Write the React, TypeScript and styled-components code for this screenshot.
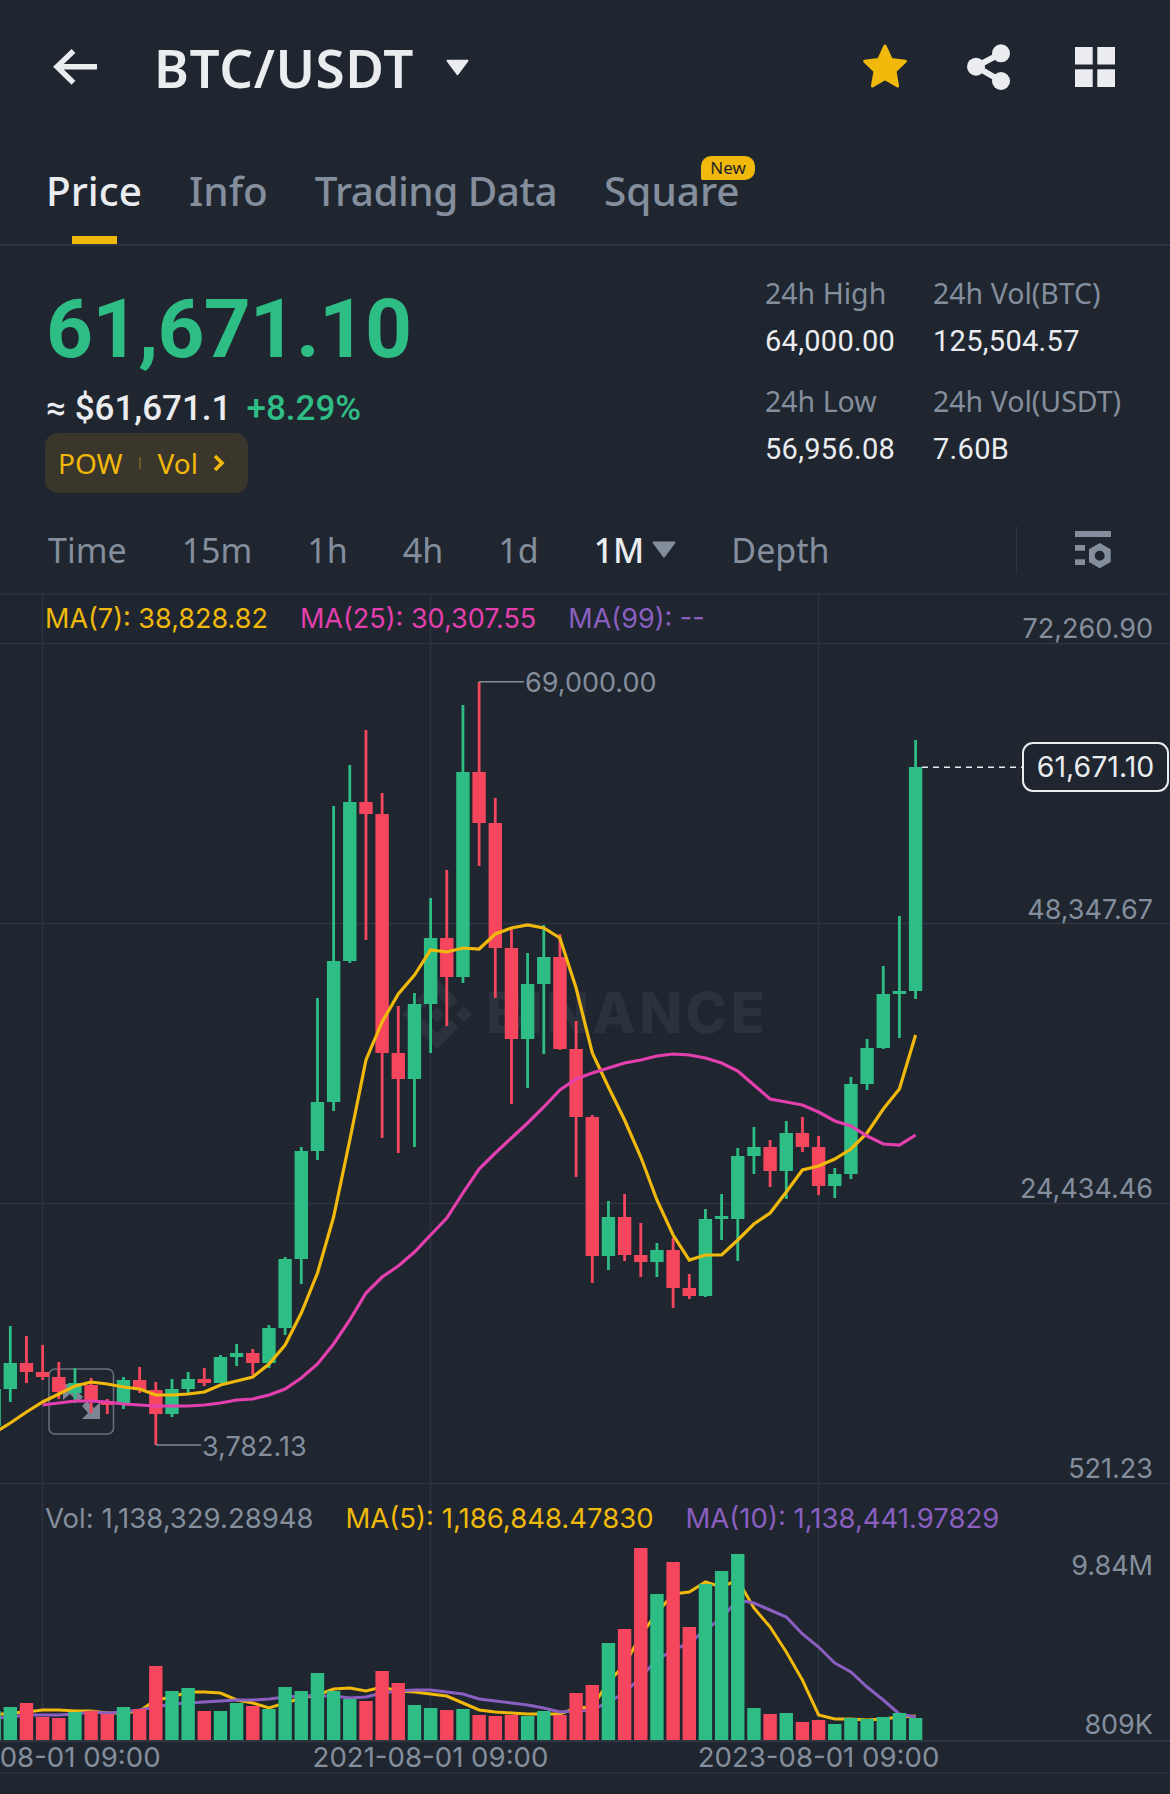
import styled, { createGlobalStyle } from 'styled-components'

const BG = '#1f2630'
const GREEN = '#2ebd85'
const RED = '#f6465d'
const YELLOW = '#f0b90b'
const PINK = '#e43fae'
const PURPLE = '#8a5fc0'
const GREY = '#848e9c'
const LINE = '#2e3541'
const UI_FONT = '"Noto Sans", sans-serif'
const NUM_FONT = 'Roboto, sans-serif'
const CHART_FONT = 'Inter, sans-serif'

const GlobalStyle = createGlobalStyle`
  html, body {
    margin: 0;
    padding: 0;
    background: ${BG};
  }
`

const Page = styled.div`
  width: 1170px;
  height: 1794px;
  overflow: hidden;
  background: ${BG};
  font-family: ${UI_FONT};
`

const Header = styled.header`
  display: flex;
  align-items: center;
  height: 134px;
  padding: 0 55px 0 53px;
`

const Title = styled.h1`
  margin: 0 0 0 56px;
  font-size: 53px;
  font-weight: 600;
  line-height: 1;
  color: #eaecef;
  letter-spacing: 0.6px;
`

const TitleCaret = styled.span`
  display: flex;
  margin-left: 32px;
`

const IconRow = styled.div`
  display: flex;
  align-items: center;
  gap: 58px;
  margin-left: auto;

  svg {
    overflow: visible;
    display: block;
  }
`

const Tabs = styled.nav`
  display: flex;
  gap: 47px;
  height: 112px;
  padding-left: 46px;
  box-sizing: border-box;
  border-bottom: 2px solid ${LINE};
`

const Tab = styled.div<{ $active?: boolean; $tight?: boolean }>`
  position: relative;
  height: 110px;
  padding-top: 31px;
  box-sizing: border-box;
  font-size: 40.5px;
  line-height: 52px;
  font-weight: 500;
  letter-spacing: ${(p) => (p.$tight ? '-0.55px' : '0')};
  color: ${(p) => (p.$active ? '#eaecef' : GREY)};

  ${(p) =>
    p.$active &&
    `
    &::after {
      content: '';
      position: absolute;
      left: 50%;
      bottom: 0;
      width: 45px;
      height: 8px;
      margin-left: -22px;
      background: ${YELLOW};
    }
  `}
`

const NewBadge = styled.span`
  position: absolute;
  top: 22px;
  left: 97px;
  width: 54px;
  height: 24px;
  border-radius: 10px 10px 10px 2px;
  background: ${YELLOW};
  color: #1e2329;
  font-size: 17px;
  line-height: 24px;
  font-weight: 400;
  text-align: center;
`

const Market = styled.section`
  display: flex;
  justify-content: space-between;
  height: 264px;
`

const MarketLeft = styled.div`
  display: flex;
  flex-direction: column;
  align-items: flex-start;
  padding: 43px 0 0 46px;
`

const LastPrice = styled.div`
  font-family: ${NUM_FONT};
  font-size: 82px;
  line-height: 80px;
  font-weight: 700;
  color: ${GREEN};
  letter-spacing: -0.9px;
`

const FiatRow = styled.div`
  display: flex;
  gap: 15px;
  margin-top: 20px;
  font-family: ${NUM_FONT};
  font-size: 35px;
  line-height: 40px;
  font-weight: 500;
`

const Fiat = styled.span`
  color: #eaecef;
`

const Change = styled.span`
  color: ${GREEN};
`

const TagPill = styled.div`
  display: flex;
  align-items: center;
  width: 203px;
  height: 60px;
  margin: 4px 0 0 -1px;
  padding-left: 13px;
  box-sizing: border-box;
  border-radius: 13px;
  background: #3a362c;
  color: ${YELLOW};
  font-size: 28px;
  font-weight: 400;
`

const TagDivider = styled.i`
  width: 2px;
  height: 12px;
  margin: 0 17px 0 16px;
  background: #6d5c22;
`

const TagChevron = styled.svg`
  margin-left: 15px;
`

const Stats = styled.div`
  display: grid;
  grid-template-columns: 168px 205px;
  row-gap: 12px;
  margin-right: 32px;
  padding-top: 23px;
  align-content: start;
`

const Stat = styled.div`
  display: flex;
  flex-direction: column;
`

const StatLabel = styled.span`
  font-size: 28.5px;
  line-height: 48px;
  color: ${GREY};
  white-space: nowrap;
`

const StatValue = styled.span`
  font-family: ${NUM_FONT};
  font-size: 29px;
  line-height: 48px;
  font-weight: 400;
  letter-spacing: 0.3px;
  color: #eaecef;
`

const IntervalBar = styled.div`
  display: flex;
  align-items: center;
  gap: 55px;
  height: 83px;
  padding: 0 58px 4px 48px;
  box-sizing: border-box;
`

const Interval = styled.span<{ $active?: boolean }>`
  display: flex;
  align-items: center;
  gap: 8px;
  font-size: 34px;
  font-weight: ${(p) => (p.$active ? 500 : 400)};
  color: ${(p) => (p.$active ? '#eaecef' : GREY)};
`

const IntervalTools = styled.div`
  display: flex;
  align-items: center;
  gap: 58px;
  margin-left: auto;
`

const ToolDivider = styled.i`
  width: 1px;
  height: 48px;
  background: ${LINE};
`

const Chart = styled.section`
  position: relative;
  height: 1181px;
  font-family: ${CHART_FONT};
  overflow: hidden;
`

const ChartSvg = styled.svg`
  position: absolute;
  top: 0;
  left: 0;
  display: block;
`

const AxisText = styled.text<{ $fill?: string }>`
  font-family: ${CHART_FONT};
  font-size: 27px;
  fill: ${(p) => p.$fill || GREY};
`

const WatermarkText = styled.text`
  font-family: ${CHART_FONT};
  font-size: 56px;
  font-weight: 800;
  letter-spacing: 3.5px;
  fill: #2c323c;
`

const Pane = styled.div<{ $height: number; $pad: number }>`
  position: relative;
  height: ${(p) => p.$height}px;
  padding-top: ${(p) => p.$pad}px;
  box-sizing: border-box;
`

const Legend = styled.div<{ $size: number }>`
  display: flex;
  gap: 32px;
  padding-left: 45px;
  font-size: ${(p) => p.$size}px;
  line-height: 32px;
`

const LegendItem = styled.span<{ $color: string }>`
  color: ${(p) => p.$color};
  white-space: nowrap;
`

const PriceTag = styled.div`
  position: absolute;
  left: 1022px;
  top: 149px;
  width: 147px;
  height: 50px;
  box-sizing: border-box;
  border: 2px solid #eaecef;
  border-radius: 11px;
  background: ${BG};
  color: #eaecef;
  font-size: 28.5px;
  line-height: 46px;
  text-align: center;
`

const TimeAxis = styled.div`
  position: relative;
  display: grid;
  grid-template-columns: repeat(3, 388px);
  height: 33px;
  margin-left: -151.5px;
  font-size: 27.6px;
  line-height: 33px;
  color: ${GREY};
`

const TimeLabel = styled.span`
  text-align: center;
  white-space: nowrap;
`

// color, wick top, wick bottom, body top, body bottom (page px, x comes from the index)
type Candle = ['g' | 'r', number, number, number, number]

const CANDLES: Candle[] = [
  ['g', 1370, 1440, 1389, 1426],
  ['g', 1326, 1402, 1363, 1389],
  ['r', 1336, 1383, 1363, 1372],
  ['r', 1345, 1380, 1372, 1377],
  ['r', 1362, 1399, 1377, 1392],
  ['g', 1368, 1403, 1383, 1393],
  ['r', 1378, 1413, 1385, 1401],
  ['r', 1399, 1414, 1401, 1405],
  ['g', 1377, 1409, 1380, 1405],
  ['r', 1367, 1393, 1380, 1390],
  ['r', 1382, 1445, 1390, 1414],
  ['g', 1379, 1417, 1389, 1414],
  ['g', 1372, 1393, 1379, 1389],
  ['r', 1368, 1386, 1379, 1383],
  ['g', 1355, 1383, 1357, 1383],
  ['g', 1344, 1366, 1353, 1357],
  ['r', 1349, 1375, 1353, 1363],
  ['g', 1325, 1368, 1328, 1363],
  ['g', 1257, 1335, 1259, 1328],
  ['g', 1147, 1284, 1151, 1259],
  ['g', 998, 1160, 1102, 1151],
  ['g', 806, 1111, 961, 1102],
  ['g', 765, 963, 802, 961],
  ['r', 730, 940, 802, 814],
  ['r', 793, 1138, 814, 1053],
  ['r', 1006, 1153, 1053, 1079],
  ['g', 993, 1147, 1004, 1079],
  ['g', 898, 1053, 938, 1004],
  ['r', 870, 1026, 938, 977],
  ['g', 705, 983, 772, 977],
  ['r', 682, 866, 772, 823],
  ['r', 798, 998, 823, 948],
  ['r', 929, 1104, 948, 1039],
  ['g', 953, 1088, 984, 1039],
  ['g', 925, 1054, 957, 984],
  ['r', 934, 1050, 957, 1049],
  ['r', 1021, 1177, 1049, 1117],
  ['r', 1115, 1283, 1117, 1256],
  ['g', 1201, 1270, 1217, 1256],
  ['r', 1194, 1261, 1217, 1255],
  ['r', 1223, 1277, 1255, 1262],
  ['g', 1243, 1277, 1250, 1262],
  ['r', 1238, 1308, 1250, 1288],
  ['r', 1274, 1299, 1288, 1296],
  ['g', 1209, 1297, 1219, 1296],
  ['g', 1194, 1240, 1216, 1219],
  ['g', 1148, 1261, 1156, 1219],
  ['g', 1127, 1174, 1147, 1156],
  ['r', 1140, 1187, 1147, 1171],
  ['g', 1121, 1199, 1133, 1171],
  ['r', 1117, 1152, 1133, 1147],
  ['r', 1136, 1195, 1147, 1186],
  ['g', 1168, 1198, 1174, 1186],
  ['g', 1077, 1179, 1084, 1174],
  ['g', 1039, 1090, 1048, 1084],
  ['g', 966, 1049, 994, 1048],
  ['g', 916, 1038, 991, 994],
  ['g', 740, 999, 767, 991],
]

// starts one candle left of the screen edge
const MA7 = [
  1433, 1423, 1412, 1402, 1394, 1386, 1382, 1384, 1387, 1389, 1395, 1395, 1394, 1392, 1385,
  1381, 1377, 1364, 1345, 1313, 1273, 1217, 1140, 1060, 1022, 994, 975, 950, 952, 948, 949,
  934, 928, 925, 928, 938, 988, 1053, 1087, 1120, 1157, 1200, 1235, 1260, 1255, 1255, 1240,
  1224, 1213, 1192, 1170, 1166, 1159, 1149, 1133, 1109, 1089, 1035,
]

// starts at candle index 2
const MA25 = [
  1405, 1403, 1401, 1401, 1402, 1404, 1405, 1406, 1406, 1406, 1405, 1403, 1400, 1399, 1395,
  1389, 1378, 1364, 1344, 1320, 1293, 1277, 1266, 1252, 1235, 1218, 1193, 1169, 1153, 1138,
  1123, 1107, 1090, 1079, 1073, 1068, 1063, 1060, 1056, 1054, 1055, 1058, 1063, 1071, 1085,
  1099, 1102, 1105, 1112, 1121, 1126, 1136, 1144, 1145, 1135,
]

const VOLUMES: ['g' | 'r', number][] = [
  ['g', 1711], ['g', 1707], ['r', 1703], ['r', 1717], ['r', 1718], ['g', 1712], ['r', 1711],
  ['r', 1714], ['g', 1707], ['r', 1709], ['r', 1666], ['g', 1691], ['g', 1688], ['r', 1711],
  ['g', 1711], ['g', 1703], ['r', 1706], ['g', 1709], ['g', 1687], ['g', 1691], ['g', 1673],
  ['g', 1691], ['g', 1699], ['r', 1701], ['r', 1671], ['r', 1683], ['g', 1705], ['g', 1708],
  ['r', 1710], ['g', 1709], ['r', 1715], ['r', 1716], ['r', 1715], ['g', 1716], ['g', 1711],
  ['r', 1715], ['r', 1693], ['r', 1685], ['g', 1643], ['r', 1629], ['r', 1548], ['g', 1594],
  ['r', 1562], ['r', 1627], ['g', 1584], ['g', 1571], ['g', 1554], ['g', 1708], ['r', 1714],
  ['g', 1713], ['r', 1722], ['r', 1720], ['g', 1724], ['g', 1718], ['g', 1719], ['g', 1717],
  ['g', 1713], ['g', 1718],
]

const VOL_MA5 = [
  1715, 1713, 1712, 1710, 1710, 1711, 1711, 1713, 1713, 1711, 1700, 1697, 1692, 1692, 1693,
  1700, 1703, 1708, 1703, 1698, 1695, 1689, 1688, 1691, 1687, 1691, 1692, 1694, 1696, 1703,
  1710, 1712, 1713, 1714, 1714, 1714, 1708, 1707, 1682, 1665, 1635, 1613, 1594, 1592, 1582,
  1587, 1580, 1608, 1627, 1652, 1680, 1715, 1719, 1719, 1720, 1719, 1717, 1716,
]

const VOL_MA10 = [
  1718, 1717, 1715, 1715, 1715, 1714, 1712, 1713, 1712, 1710, 1707, 1704, 1703, 1702, 1701,
  1700, 1700, 1699, 1697, 1696, 1696, 1696, 1698, 1697, 1693, 1691, 1690, 1690, 1692, 1694,
  1699, 1701, 1703, 1705, 1708, 1712, 1711, 1710, 1702, 1693, 1677, 1660, 1650, 1643, 1630,
  1618, 1600, 1603, 1610, 1617, 1634, 1647, 1663, 1672, 1687, 1700, 1714, 1717,
]

const candleX = (i: number) => 10.3 + i * 16.166

const toPoints = (values: number[], startIndex: number) =>
  values.map((y, i) => `${candleX(i + startIndex).toFixed(1)},${y}`).join(' ')

const colorOf = (c: 'g' | 'r') => (c === 'g' ? GREEN : RED)

function GridLines() {
  return (
    <g stroke={LINE} strokeWidth={1.5}>
      {[594, 643.5, 923.5, 1203.5, 1483.5, 1773].map((y) => (
        <line key={y} x1={0} x2={1170} y1={y} y2={y} />
      ))}
      <line x1={0} x2={1170} y1={1741} y2={1741} strokeWidth={2.5} />
      {[42.5, 430.5, 818.5].map((x) => (
        <line key={x} x1={x} x2={x} y1={593} y2={1740} />
      ))}
    </g>
  )
}

function Watermark() {
  return (
    <g>
      <svg x={402} y={979} width={70} height={70} viewBox="0 0 24 24">
        <path
          fill="#2c323c"
          d="M7.4 10.1 12 5.5l4.6 4.6 2.7-2.7L12 0 4.7 7.3zM0 12l2.7-2.7L5.4 12l-2.7 2.7zm7.4 1.9L12 18.5l4.6-4.6 2.7 2.7L12 24l-7.3-7.3zM18.6 12l2.7-2.7L24 12l-2.7 2.7zM14.7 12 12 9.3 9.3 12 12 14.7z"
        />
      </svg>
      <WatermarkText x={486} y={1033}>BINANCE</WatermarkText>
    </g>
  )
}

function TradeMarker() {
  return (
    <g>
      <rect x={49} y={1369} width={64.5} height={65} rx={6} fill="none" stroke="#6a7280" strokeWidth={1.5} />
      <path fill="#7d8695" d="M63 1384h17l-5 5 8 8-5 5-8-8-7 6z" />
      <path fill="#7d8695" d="M100 1419H82l6-6-6-7 5-5 7 7 6-6z" />
    </g>
  )
}

function PriceCandles() {
  return (
    <g>
      {CANDLES.map(([c, wickTop, wickBottom, bodyTop, bodyBottom], i) => {
        const x = candleX(i - 1)
        return (
          <g key={i} fill={colorOf(c)}>
            <rect x={x - 1.4} y={wickTop} width={2.8} height={wickBottom - wickTop} />
            <rect x={x - 6.7} y={bodyTop} width={13.4} height={bodyBottom - bodyTop} />
          </g>
        )
      })}
    </g>
  )
}

function VolumeBars() {
  return (
    <g>
      {VOLUMES.map(([c, top], i) => (
        <rect key={i} x={candleX(i - 1) - 6.7} y={top} width={13.4} height={1740 - top} fill={colorOf(c)} />
      ))}
    </g>
  )
}

const Star = () => (
  <svg width="44" height="46" viewBox="0 0 44 46">
    <polygon
      fill={YELLOW}
      stroke={YELLOW}
      strokeWidth={3}
      strokeLinejoin="round"
      points="22,2 28.2,15.5 42.4,17.2 32,27.2 34.6,42 22,34.8 9.4,42 12,27.2 1.6,17.2 15.8,15.5"
    />
  </svg>
)

const Share = () => (
  <svg width="48" height="48" viewBox="0 0 48 48">
    <path d="M36 10.3 11 23.7 36 38" fill="none" stroke="#eaecef" strokeWidth={6} />
    <circle cx={36} cy={10.3} r={9} fill="#eaecef" />
    <circle cx={11} cy={23.7} r={9} fill="#eaecef" />
    <circle cx={36} cy={38} r={9} fill="#eaecef" />
  </svg>
)

const Squares = () => (
  <svg width="44" height="40" viewBox="0 0 44 40" fill="#eaecef">
    <rect x={4} y={0} width={17.7} height={17.5} />
    <rect x={26.3} y={0} width={17.7} height={17.5} />
    <rect x={4} y={22.3} width={17.7} height={17.7} />
    <rect x={26.3} y={22.3} width={17.7} height={17.7} />
  </svg>
)

const TinyCaret = ({ color, width, height }: { color: string; width: number; height: number }) => (
  <svg width={width} height={height} viewBox="0 0 24 17">
    <path d="M1.5 1.5h21L12 15.5z" fill={color} stroke={color} strokeWidth={2} strokeLinejoin="round" />
  </svg>
)

function App() {
  return (
    <Page>
      <GlobalStyle />
      <Header>
        <svg width="45" height="36" viewBox="0 0 45 36" fill="none" stroke="#eaecef" strokeWidth={5.4}>
          <path d="M44 17.7H5M20.5 2 4 17.7l16.5 16" />
        </svg>
        <Title>BTC/USDT</Title>
        <TitleCaret>
          <TinyCaret color="#eaecef" width={23} height={17} />
        </TitleCaret>
        <IconRow>
          <Star />
          <Share />
          <Squares />
        </IconRow>
      </Header>

      <Tabs>
        <Tab $active>Price</Tab>
        <Tab>Info</Tab>
        <Tab $tight>Trading Data</Tab>
        <Tab>
          Square
          <NewBadge>New</NewBadge>
        </Tab>
      </Tabs>

      <Market>
        <MarketLeft>
          <LastPrice>61,671.10</LastPrice>
          <FiatRow>
            <Fiat>≈ $61,671.1</Fiat>
            <Change>+8.29%</Change>
          </FiatRow>
          <TagPill>
            POW
            <TagDivider />
            Vol
            <TagChevron width="13" height="18" viewBox="0 0 13 18" fill="none" stroke={YELLOW} strokeWidth={3.6}>
              <path d="M2 2l7 7-7 7" />
            </TagChevron>
          </TagPill>
        </MarketLeft>
        <Stats>
          <Stat>
            <StatLabel>24h High</StatLabel>
            <StatValue>64,000.00</StatValue>
          </Stat>
          <Stat>
            <StatLabel>24h Vol(BTC)</StatLabel>
            <StatValue>125,504.57</StatValue>
          </Stat>
          <Stat>
            <StatLabel>24h Low</StatLabel>
            <StatValue>56,956.08</StatValue>
          </Stat>
          <Stat>
            <StatLabel>24h Vol(USDT)</StatLabel>
            <StatValue>7.60B</StatValue>
          </Stat>
        </Stats>
      </Market>

      <IntervalBar>
        <Interval>Time</Interval>
        <Interval>15m</Interval>
        <Interval>1h</Interval>
        <Interval>4h</Interval>
        <Interval>1d</Interval>
        <Interval $active>
          1M
          <TinyCaret color={GREY} width={24} height={17} />
        </Interval>
        <Interval>Depth</Interval>
        <IntervalTools>
          <ToolDivider />
          <svg width="37" height="38" viewBox="0 0 37 38" fill={GREY}>
            <rect x={0} y={0} width={36} height={6} />
            <rect x={0} y={14} width={10} height={5.7} />
            <rect x={0} y={28.3} width={10} height={5.7} />
            <path
              fillRule="evenodd"
              d="M24.7 12 35.7 18.3V31L24.7 37.3 14 31V18.3zM24.7 19.7a5 5 0 1 0 0 10 5 5 0 0 0 0-10z"
            />
          </svg>
        </IntervalTools>
      </IntervalBar>

      <Chart>
        <ChartSvg width={1170} height={1181} viewBox="0 593 1170 1181">
          <GridLines />
          <Watermark />
          <TradeMarker />
          <PriceCandles />
          <polyline points={toPoints(MA7, -1)} fill="none" stroke={YELLOW} strokeWidth={3.2} />
          <polyline points={toPoints(MA25, 2)} fill="none" stroke={PINK} strokeWidth={3.2} />

          <path d="M479 681.7h45" stroke={GREY} strokeWidth={1.5} />
          <AxisText x={525} y={692}>69,000.00</AxisText>
          <path d="M156 1445h45" stroke={GREY} strokeWidth={1.5} />
          <AxisText x={202} y={1456}>3,782.13</AxisText>

          <line x1={922} x2={1022} y1={767.3} y2={767.3} stroke="#eaecef" strokeWidth={1.6} strokeDasharray="6 5" />

          <polyline points={toPoints(VOL_MA5, -1)} fill="none" stroke={YELLOW} strokeWidth={3} />
          <polyline points={toPoints(VOL_MA10, -1)} fill="none" stroke={PURPLE} strokeWidth={3} />
          <VolumeBars />

          <g textAnchor="end">
            <AxisText x={1153} y={638}>72,260.90</AxisText>
            <AxisText x={1153} y={919}>48,347.67</AxisText>
            <AxisText x={1153} y={1198}>24,434.46</AxisText>
            <AxisText x={1153} y={1478}>521.23</AxisText>
            <AxisText x={1153} y={1575}>9.84M</AxisText>
            <AxisText x={1153} y={1734}>809K</AxisText>
          </g>
        </ChartSvg>

        <Pane $height={890} $pad={10}>
          <Legend $size={27}>
            <LegendItem $color={YELLOW}>MA(7): 38,828.82</LegendItem>
            <LegendItem $color={PINK}>MA(25): 30,307.55</LegendItem>
            <LegendItem $color={PURPLE}>MA(99): --</LegendItem>
          </Legend>
          <PriceTag>61,671.10</PriceTag>
        </Pane>
        <Pane $height={258} $pad={19}>
          <Legend $size={27.5}>
            <LegendItem $color={GREY}>Vol: 1,138,329.28948</LegendItem>
            <LegendItem $color={YELLOW}>MA(5): 1,186,848.47830</LegendItem>
            <LegendItem $color={PURPLE}>MA(10): 1,138,441.97829</LegendItem>
          </Legend>
        </Pane>
        <TimeAxis>
          <TimeLabel>2019-08-01 09:00</TimeLabel>
          <TimeLabel>2021-08-01 09:00</TimeLabel>
          <TimeLabel>2023-08-01 09:00</TimeLabel>
        </TimeAxis>
      </Chart>
    </Page>
  )
}

export default App
